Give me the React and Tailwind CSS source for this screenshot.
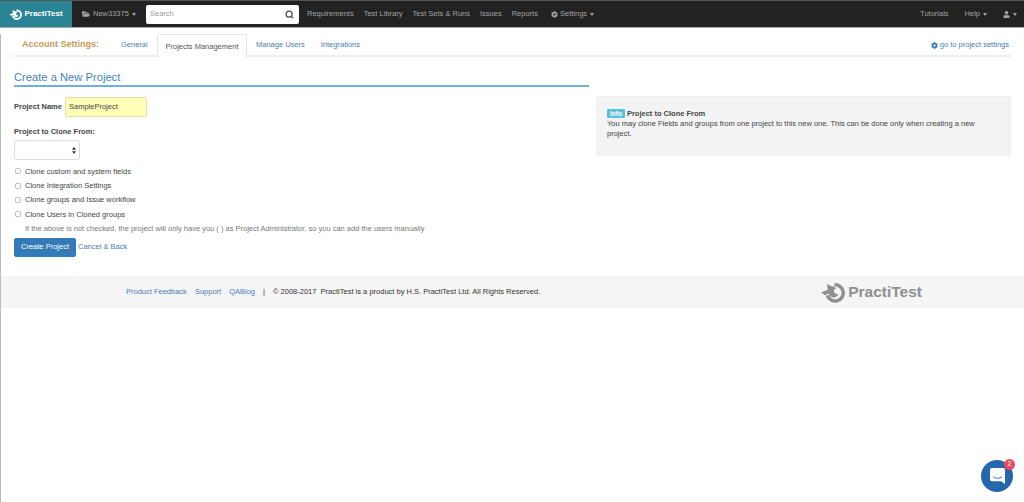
import { Search } from 'lucide-react';
import { FaCog, FaFolderOpen, FaUser } from 'react-icons/fa';

function Caret() {
  return <span className="ml-[3px] inline-block border-x-[2.5px] border-t-[3px] border-x-transparent border-t-current align-middle" />;
}

function LogoMark({ className }) {
  return (
    <svg viewBox="0 0 28 22" className={className} fill="currentColor">
      <path d="M15 3 A8.5 8.5 0 1 1 7.6 14" fill="none" stroke="currentColor" strokeWidth="3.6" />
      <path d="M1 11 L8 8 L7 2 L12 4.5 C14 4 16 5 17 7.5 C15 7 14 8 14.5 10 C14.8 12 16.5 13 19 12.5 C18 16 14 17 11.5 15.5 C10 14.5 9.5 13 9 12 L5 14 Z" />
    </svg>
  );
}

function TopBar() {
  const links = ['Requirements', 'Test Library', 'Test Sets & Runs', 'Issues', 'Reports'];
  return (
    <header className="flex h-[28px] items-center border-t border-b border-t-[#555] border-b-[#aaa] bg-[#222222] text-[7.5px] text-[#a3a3a3]">
      <div className="flex h-full w-[72px] items-center justify-center gap-[1px] bg-[#2a8494] text-white">
        <LogoMark className="h-[11px] w-[14px]" />
        <span className="text-[8px] font-bold">PractiTest</span>
      </div>
      <div className="ml-[10px] flex w-[64px] items-center">
        <FaFolderOpen size={8} className="mr-[3px]" />
        New33375
        <Caret />
      </div>
      <div className="flex h-[19px] w-[153px] items-center justify-between rounded-[2px] bg-white pl-[4px] pr-[5px] text-[#999]">
        Search
        <Search size={9} strokeWidth={3} className="text-[#444]" />
      </div>
      <nav className="ml-[8px] flex gap-[10px]">
        {links.map((link) => (
          <span key={link}>{link}</span>
        ))}
        <span className="ml-[3px] flex items-center">
          <FaCog size={7} className="mr-[2px]" />
          Settings
          <Caret />
        </span>
      </nav>
      <div className="ml-auto flex items-center pr-[7px]">
        <span>Tutorials</span>
        <span className="ml-[16px]">Help<Caret /></span>
        <span className="ml-[16px] flex items-center"><FaUser size={7} /><Caret /></span>
      </div>
    </header>
  );
}

function TabBar() {
  return (
    <div className="mx-[13px] mt-[6px] flex h-[23px] items-stretch border-b-2 border-[#eeeeee] pt-[1px] text-[7.5px] text-[#4a7db5]">
      <span className="ml-[8px] w-[99px] self-center text-[9px] font-bold text-[#c49a5a]">Account Settings:</span>
      <span className="w-[36px] self-center">General</span>
      <span className="-mb-[2px] -mt-[1px] flex w-[90px] items-center justify-center rounded-t-[2px] border border-b-0 border-[#e4e4e4] bg-white pt-[1px] text-[#555]">Projects Management</span>
      <span className="ml-[9px] self-center">Manage Users</span>
      <span className="ml-[16px] self-center">Integrations</span>
      <span className="ml-auto mr-[2px] flex items-center self-center">
        <FaCog size={7} className="mr-[2px] text-[#337ab7]" />
        go to project settings
      </span>
    </div>
  );
}

function CheckRow({ children }) {
  return (
    <label className="flex h-[14.4px] items-center">
      <span className="ml-[1px] mr-[4px] h-[6px] w-[6px] rounded-[1.5px] border border-[#bbb] bg-white" />
      {children}
    </label>
  );
}

function ProjectForm() {
  return (
    <section className="w-[575px] text-[7.5px] text-[#444]">
      <h1 className="border-b-2 border-[#6fb0d6] text-[11.2px] leading-[15px] text-[#3f84bd]">Create a New Project</h1>
      <div className="mt-[10px] flex items-center">
        <span className="w-[51px] whitespace-nowrap font-bold">Project Name</span>
        <div className="flex h-[20px] w-[82px] items-center rounded-[2px] border border-[#e3e3a8] bg-[#ffffb8] pl-[3px]">SampleProject</div>
      </div>
      <p className="mt-[9px] font-bold leading-[12px]">Project to Clone From:</p>
      <div className="mt-[2px] flex h-[20px] w-[66px] items-center justify-end rounded-[3px] border border-[#ddd] bg-white pr-[3px]">
        <svg viewBox="0 0 4 7" className="h-[7px] w-[4px] fill-[#333]">
          <path d="M2 0 L4 2.8 H0 Z M2 7 L4 4.2 H0 Z" />
        </svg>
      </div>
      <div className="mt-[4px]">
        <CheckRow>Clone custom and system fields</CheckRow>
        <CheckRow>Clone Integration Settings</CheckRow>
        <CheckRow>Clone groups and Issue workflow</CheckRow>
        <CheckRow>Clone Users in Cloned groups</CheckRow>
      </div>
      <p className="ml-[11px] h-[14px] leading-[14px] text-[#777]">If the above is not checked, the project will only have you ( ) as Project Administrator, so you can add the users manually</p>
      <div className="mt-[2px] flex items-center">
        <button className="h-[19px] w-[62px] rounded-[2px] border border-[#337ab7] bg-[#337ab7] text-[7.5px] text-white">Create Project</button>
        <a className="ml-[2px] text-[#4a7db5]">Cancel &amp; Back</a>
      </div>
    </section>
  );
}

function InfoBox() {
  return (
    <aside className="mt-[26px] h-[60px] w-[415px] rounded-[2px] border border-[#efefef] bg-[#f3f3f3] pl-[10px] pr-[30px] pt-[12px] text-[7.5px] leading-[10px] text-[#444]">
      <p className="font-bold">
        <span className="mr-[2px] rounded-[1px] bg-[#5bc0de] px-[3px] py-[1px] text-[6.5px] text-white">Info</span>
        Project to Clone From
      </p>
      <p>You may clone Fields and groups from one project to this new one. This can be done only when creating a new project.</p>
    </aside>
  );
}

function Footer() {
  return (
    <footer className="mt-[19px] flex h-[32px] items-center bg-[#f5f5f5] pl-[125px] pt-[1px] text-[7.5px] text-[#333]">
      <a className="text-[#4a7db5]">Product Feedback</a>
      <a className="ml-[8px] text-[#4a7db5]">Support</a>
      <a className="ml-[8px] text-[#4a7db5]">QABlog</a>
      <span className="ml-[8px]">|</span>
      <span className="ml-[8px] whitespace-pre">© 2008-2017  PractiTest is a product by H.S. PractiTest Ltd. All Rights Reserved.</span>
      <div className="ml-auto mr-[102px] flex items-center gap-[1px] text-[#8f8f8f]">
        <LogoMark className="h-[21px] w-[27px]" />
        <span className="text-[15.5px] font-bold">PractiTest</span>
      </div>
    </footer>
  );
}

function ChatBubble() {
  return (
    <div className="fixed left-[981px] top-[460px] flex h-[32px] w-[32px] items-center justify-center rounded-full bg-[#2468ab]">
      <svg viewBox="0 0 16 17" className="h-[16px] w-[15px]">
        <path d="M2 0 H14 A2 2 0 0 1 16 2 V17 L12 14 H2 A2 2 0 0 1 0 12 V2 A2 2 0 0 1 2 0 Z" fill="#fff" />
        <path d="M3.5 9.5 C6 11.5 10 11.5 12.5 9.5" stroke="#2468ab" strokeWidth="1" fill="none" strokeLinecap="round" />
      </svg>
      <span className="absolute -right-[2px] -top-[1px] flex h-[11px] w-[11px] items-center justify-center rounded-full bg-[#ee4a5f] text-[7px] text-white">2</span>
    </div>
  );
}

export default function App() {
  return (
    <div className="min-h-[502px] bg-white font-['Liberation_Sans',Arial,sans-serif]">
      <TopBar />
      <div className="min-h-[474px] border-l border-[#bbb]">
        <TabBar />
        <main className="mt-[13px] flex pl-[13px]">
          <ProjectForm />
          <div className="ml-[7px]">
            <InfoBox />
          </div>
        </main>
        <Footer />
      </div>
      <ChatBubble />
    </div>
  );
}
